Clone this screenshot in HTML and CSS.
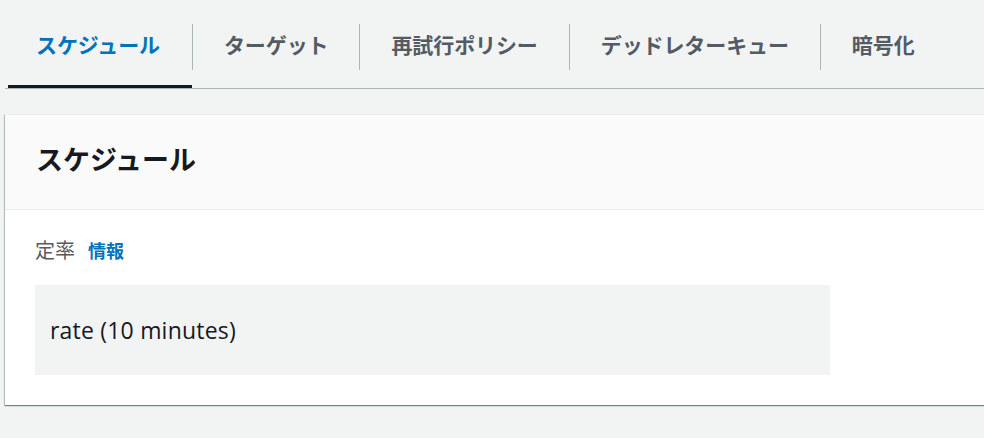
FILE: index.html
```html
<!DOCTYPE html>
<html lang="ja">
<head>
<meta charset="utf-8">
<link rel="stylesheet" href="styles.css">
</head>
<body>
<nav class="tabs">
  <div class="tab tab-first tab-active"><span class="tab-label">スケジュール</span></div>
  <div class="tab"><span class="tab-label">ターゲット</span></div>
  <div class="tab"><span class="tab-label">再試行ポリシー</span></div>
  <div class="tab"><span class="tab-label">デッドレターキュー</span></div>
  <div class="tab"><span class="tab-label">暗号化</span></div>
</nav>
<section class="card">
  <header class="card-header"><h2 class="card-title">スケジュール</h2></header>
  <div class="card-body">
    <div class="field-label">定率<a class="info-link">情報</a></div>
    <div class="field-value">rate (10 minutes)</div>
  </div>
</section>
</body>
</html>
```
FILE: styles.css
```css
html, body {
  margin: 0;
  padding: 0;
}
body {
  background: #f2f3f3;
  font-family: "Noto Sans CJK JP", "Open Sans", sans-serif;
  overflow: hidden;
  width: 984px;
  height: 438px;
}
.tabs {
  display: flex;
  margin-left: 5px;
  padding-left: 3px;
  border-bottom: 1px solid #aab7b8;
}
.tab {
  padding-top: 24px;
  padding-bottom: 15px;
  border-bottom: 3px solid transparent;
}
.tab-active {
  border-bottom-color: #16191f;
}
.tab-label {
  display: block;
  height: 46px;
  line-height: 41px;
  padding: 0 31px;
  border-left: 1px solid #aab7b8;
  font-size: 21px;
  font-weight: 700;
  color: #545b64;
  white-space: nowrap;
  letter-spacing: -0.1px;
}
.tab-first .tab-label {
  border-left: none;
  padding-left: 28px;
  padding-right: 32px;
}
.tab-active .tab-label {
  color: #0073bb;
}
.card {
  margin: 25px -10px 0 5px;
  background: #ffffff;
  border-top: 1px solid #eaeded;
  box-shadow: 0 1px 1px 0 rgba(0, 28, 36, 0.4), -1px 1px 1px 0 rgba(0, 28, 36, 0.2);
}
.card-header {
  height: 95px;
  box-sizing: border-box;
  display: flex;
  align-items: center;
  padding: 0 31px 7px;
  background: #fafafa;
  border-bottom: 1px solid #eaeded;
}
.card-title {
  margin: 0;
  font-size: 27px;
  font-weight: 700;
  color: #16191f;
  line-height: 1;
}
.card-body {
  padding: 26px 30px 30px;
}
.field-label {
  font-size: 20px;
  line-height: 28px;
  color: #545b64;
  margin-bottom: 21px;
}
.info-link {
  margin-left: 13px;
  font-size: 18px;
  font-weight: 700;
  color: #0073bb;
}
.field-value {
  width: 795px;
  height: 90px;
  box-sizing: border-box;
  display: flex;
  align-items: center;
  padding-left: 15px;
  background: #f2f3f3;
  font-family: "Open Sans", "Noto Sans", sans-serif;
  font-size: 23px;
  letter-spacing: 0.2px;
  color: #16191f;
}
```
